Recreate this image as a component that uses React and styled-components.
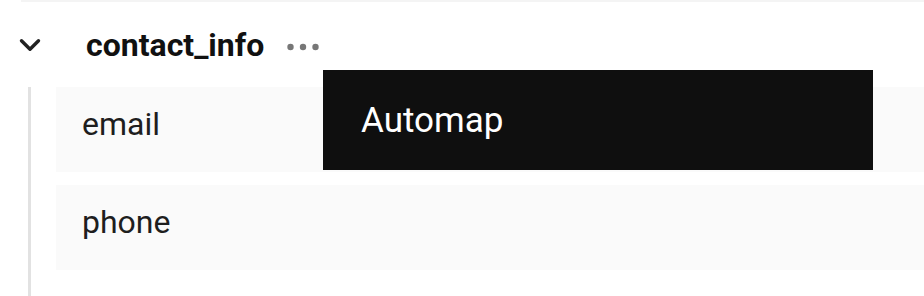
import React from 'react'
import styled, { createGlobalStyle } from 'styled-components'
import { ChevronDown } from 'lucide-react'

const GlobalStyle = createGlobalStyle`
  body {
    margin: 0;
    background: #fff;
    font-family: Roboto, "Liberation Sans", sans-serif;
  }
`

const Page = styled.div`
  position: relative;
  height: 296px;
  overflow: hidden;
`

const PrevEdge = styled.div`
  margin-left: 21px;
  height: 2px;
  background: #f4f4f4;
`

const Header = styled.div`
  display: flex;
  align-items: center;
  height: 85px;
`

const Toggle = styled.button`
  width: 60px;
  display: flex;
  justify-content: center;
  align-items: center;
  padding: 0;
  border: none;
  background: none;
  color: #222;
  cursor: pointer;
`

const Title = styled.span`
  margin-left: 26px;
  font-size: 32px;
  font-weight: 700;
  color: #111;
`

const More = styled.svg`
  margin-left: 23px;
  margin-top: 4px;
`

const Children = styled.div`
  display: flex;
  flex-direction: column;
  gap: 13px;
  margin-left: 28px;
  padding-left: 25px;
  border-left: 3px solid #e2e2e2;
  height: 210px;
`

const Field = styled.div`
  display: flex;
  align-items: center;
  height: 85px;
  box-sizing: border-box;
  padding: 0 26px 12px;
  background: #fafafa;
  font-size: 32px;
  color: #1e1e1e;
`

const Tooltip = styled.div`
  position: absolute;
  left: 323px;
  top: 70px;
  width: 550px;
  height: 100px;
  box-sizing: border-box;
  display: flex;
  align-items: center;
  padding-left: 38px;
  background: #0f0f0f;
  color: #fff;
  font-size: 35px;
`

const fields = ['email', 'phone']

export default function App() {
  return (
    <Page>
      <GlobalStyle />
      <PrevEdge />
      <Header>
        <Toggle aria-label="collapse">
          <ChevronDown size={34} strokeWidth={2.4} />
        </Toggle>
        <Title>contact_info</Title>
        <More width="32" height="8" viewBox="0 0 32 8">
          <circle cx="3.5" cy="4" r="3.2" fill="#777" />
          <circle cx="16" cy="4" r="3.2" fill="#777" />
          <circle cx="28.5" cy="4" r="3.2" fill="#777" />
        </More>
      </Header>
      <Children>
        {fields.map((f) => (
          <Field key={f}>{f}</Field>
        ))}
      </Children>
      <Tooltip>Automap</Tooltip>
    </Page>
  )
}
